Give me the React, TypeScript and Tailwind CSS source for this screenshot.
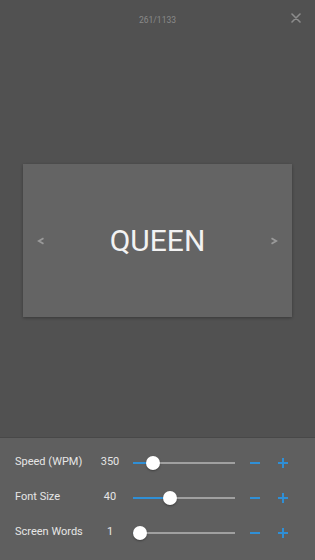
import React from 'react';

interface SettingRowProps {
  label: string;
  value: string;
  percent: number;
}

function SettingRow({ label, value, percent }: SettingRowProps) {
  return (
    <div className="flex h-[35px] items-center">
      <span className="w-[80px] pl-[15px] box-content text-[11px] text-[#e6e6e6]">{label}</span>
      <span className="w-[30px] text-center text-[11px] text-[#e6e6e6]">{value}</span>
      <div className="relative ml-[8px] h-[14px] w-[102px]">
        <div className="absolute left-0 right-0 top-[6px] h-[2px] bg-[#a0a0a0]" />
        <div className="absolute left-0 top-[6px] h-[2px] bg-[#2f8fd6]" style={{ width: `${percent}%` }} />
        <div
          className="absolute top-0 h-[14px] w-[14px] -translate-x-1/2 rounded-full bg-white shadow-[0_1px_2px_rgba(0,0,0,0.35)]"
          style={{ left: `${percent}%` }}
        />
      </div>
      <div className="ml-[15px] flex w-[10px] justify-center">
        <div className="h-[2px] w-[10px] bg-[#2f8fd6]" />
      </div>
      <div className="relative ml-[18px] h-[10px] w-[10px]">
        <div className="absolute left-0 top-[4px] h-[2px] w-[10px] bg-[#2f8fd6]" />
        <div className="absolute left-[4px] top-0 h-[10px] w-[2px] bg-[#2f8fd6]" />
      </div>
    </div>
  );
}

export default function App() {
  return (
    <div className="flex h-[560px] w-[315px] flex-col bg-[#515151]" style={{ fontFamily: 'Roboto, "Liberation Sans", sans-serif' }}>
      <div className="relative flex h-[40px] items-center justify-center">
        <span className="text-[8.5px] text-[#8a8a8a]">261/1133</span>
        <svg className="absolute right-[14px] top-[13px]" width="10" height="10" viewBox="0 0 10 10">
          <path d="M1 1 L9 9 M9 1 L1 9" stroke="#8c8c8c" strokeWidth="1.6" strokeLinecap="round" />
        </svg>
      </div>
      <div className="flex flex-1 items-center justify-center pt-[4px]">
        <div className="flex h-[153px] w-[269px] items-center justify-between bg-[#646464] pl-[14px] pr-[14px] shadow-[0_1px_3px_rgba(0,0,0,0.3)]">
          <svg width="8" height="8" viewBox="0 0 8 8">
            <path d="M6.5 1.2 L1.8 4 L6.5 6.8" fill="none" stroke="#9a9a9a" strokeWidth="1.8" />
          </svg>
          <span className="text-[30px] text-[#f2f2f2]">QUEEN</span>
          <svg width="8" height="8" viewBox="0 0 8 8">
            <path d="M1.5 1.2 L6.2 4 L1.5 6.8" fill="none" stroke="#9a9a9a" strokeWidth="1.8" />
          </svg>
        </div>
      </div>
      <div className="h-[123px] border-t border-[#484848] bg-[#5f5f5f] pt-[7px]">
        <SettingRow label="Speed (WPM)" value="350" percent={20} />
        <SettingRow label="Font Size" value="40" percent={36} />
        <SettingRow label="Screen Words" value="1" percent={7} />
      </div>
    </div>
  );
}
